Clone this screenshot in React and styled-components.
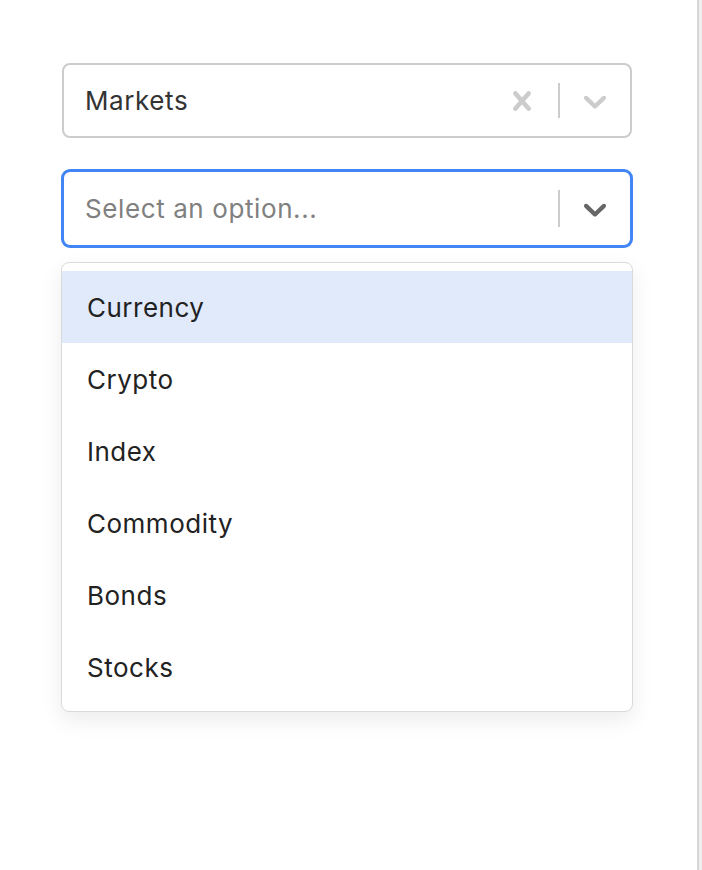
import React from 'react';
import styled, { createGlobalStyle } from 'styled-components';

const GlobalStyle = createGlobalStyle`
  html, body {
    margin: 0;
    padding: 0;
    background: #fff;
  }
  body {
    font-family: Inter, "Noto Sans", sans-serif;
  }
`

const Frame = styled.div`
  display: flex;
  min-height: 870px;
`

const Page = styled.div`
  flex: 1;
  border-right: 2px solid #d6d6d6;
  padding: 63px 0 0 62px;
`

const Gutter = styled.div`
  width: 3px;
  background: #efefef;
`

const Column = styled.div`
  width: 570px;
  display: flex;
  flex-direction: column;
  gap: 32px;
`

const Field = styled.div`
  display: flex;
  flex-direction: column;
`

const Control = styled.div`
  box-sizing: border-box;
  height: ${(p) => (p.focused ? '77px' : '75px')};
  display: flex;
  align-items: stretch;
  border: 2px solid ${(p) => (p.focused ? '#4285f4' : '#cccccc')};
  box-shadow: ${(p) => (p.focused ? '0 0 0 1px #4285f4' : 'none')};
  border-radius: 8px;
  background: #fff;
`

const Value = styled.div`
  flex: 1;
  display: flex;
  align-items: center;
  padding-left: 21px;
  font-size: 26px;
  letter-spacing: 0.6px;
  color: ${(p) => (p.placeholder ? '#808080' : '#333333')};
`

const Indicators = styled.div`
  display: flex;
  align-items: stretch;
`

const Indicator = styled.div`
  display: flex;
  align-items: center;
  padding: 0 ${(p) => p.pad || 16}px;
  color: ${(p) => p.color};
`

const Separator = styled.span`
  width: 2px;
  margin: 18px 0;
  background: #cccccc;
`

const Menu = styled.div`
  margin: 15px -1px 0;
  border: 1px solid #dadada;
  border-radius: 8px;
  padding: 8px 0;
  background: #fff;
  box-shadow: 0 8px 22px rgba(0, 0, 0, 0.08);
`

const Option = styled.div`
  height: 72px;
  display: flex;
  align-items: center;
  padding-left: 25px;
  font-size: 26px;
  letter-spacing: 0.5px;
  color: #222222;
  background: ${(p) => (p.active ? '#e1eafb' : 'transparent')};
`

const CrossIcon = () => (
  <svg width="38" height="38" viewBox="0 0 20 20" fill="currentColor">
    <path d="M14.348 14.849c-0.469 0.469-1.229 0.469-1.697 0l-2.651-3.030-2.651 3.029c-0.469 0.469-1.229 0.469-1.697 0-0.469-0.469-0.469-1.229 0-1.697l2.758-3.15-2.759-3.152c-0.469-0.469-0.469-1.228 0-1.697s1.228-0.469 1.697 0l2.652 3.031 2.651-3.031c0.469-0.469 1.228-0.469 1.697 0s0.469 1.229 0 1.697l-2.758 3.152 2.758 3.15c0.469 0.469 0.469 1.229 0 1.698z" />
  </svg>
)

const ChevronIcon = () => (
  <svg width="38" height="38" viewBox="0 0 20 20" fill="currentColor">
    <path d="M4.516 7.548c0.436-0.446 1.043-0.481 1.576 0l3.908 3.747 3.908-3.747c0.533-0.481 1.141-0.446 1.574 0 0.436 0.445 0.408 1.197 0 1.615-0.406 0.418-4.695 4.502-4.695 4.502-0.217 0.223-0.502 0.335-0.787 0.335s-0.57-0.112-0.789-0.335c0 0-4.287-4.084-4.695-4.502s-0.436-1.170 0-1.615z" />
  </svg>
)

const options = ['Currency', 'Crypto', 'Index', 'Commodity', 'Bonds', 'Stocks'];

const App = () => {
  return (
    <>
      <GlobalStyle />
      <Frame>
        <Page>
          <Column>
            <Control>
              <Value>Markets</Value>
              <Indicators>
                <Indicator color="#cccccc" pad={17}><CrossIcon /></Indicator>
                <Separator />
                <Indicator color="#cccccc"><ChevronIcon /></Indicator>
              </Indicators>
            </Control>

            <Field>
              <Control focused>
                <Value placeholder="true">Select an option...</Value>
                <Indicators>
                  <Separator />
                  <Indicator color="#666666"><ChevronIcon /></Indicator>
                </Indicators>
              </Control>
              <Menu>
                {options.map((o, i) => (
                  <Option key={o} active={i === 0}>{o}</Option>
                ))}
              </Menu>
            </Field>
          </Column>
        </Page>
        <Gutter />
      </Frame>
    </>
  );
}

export default App;
